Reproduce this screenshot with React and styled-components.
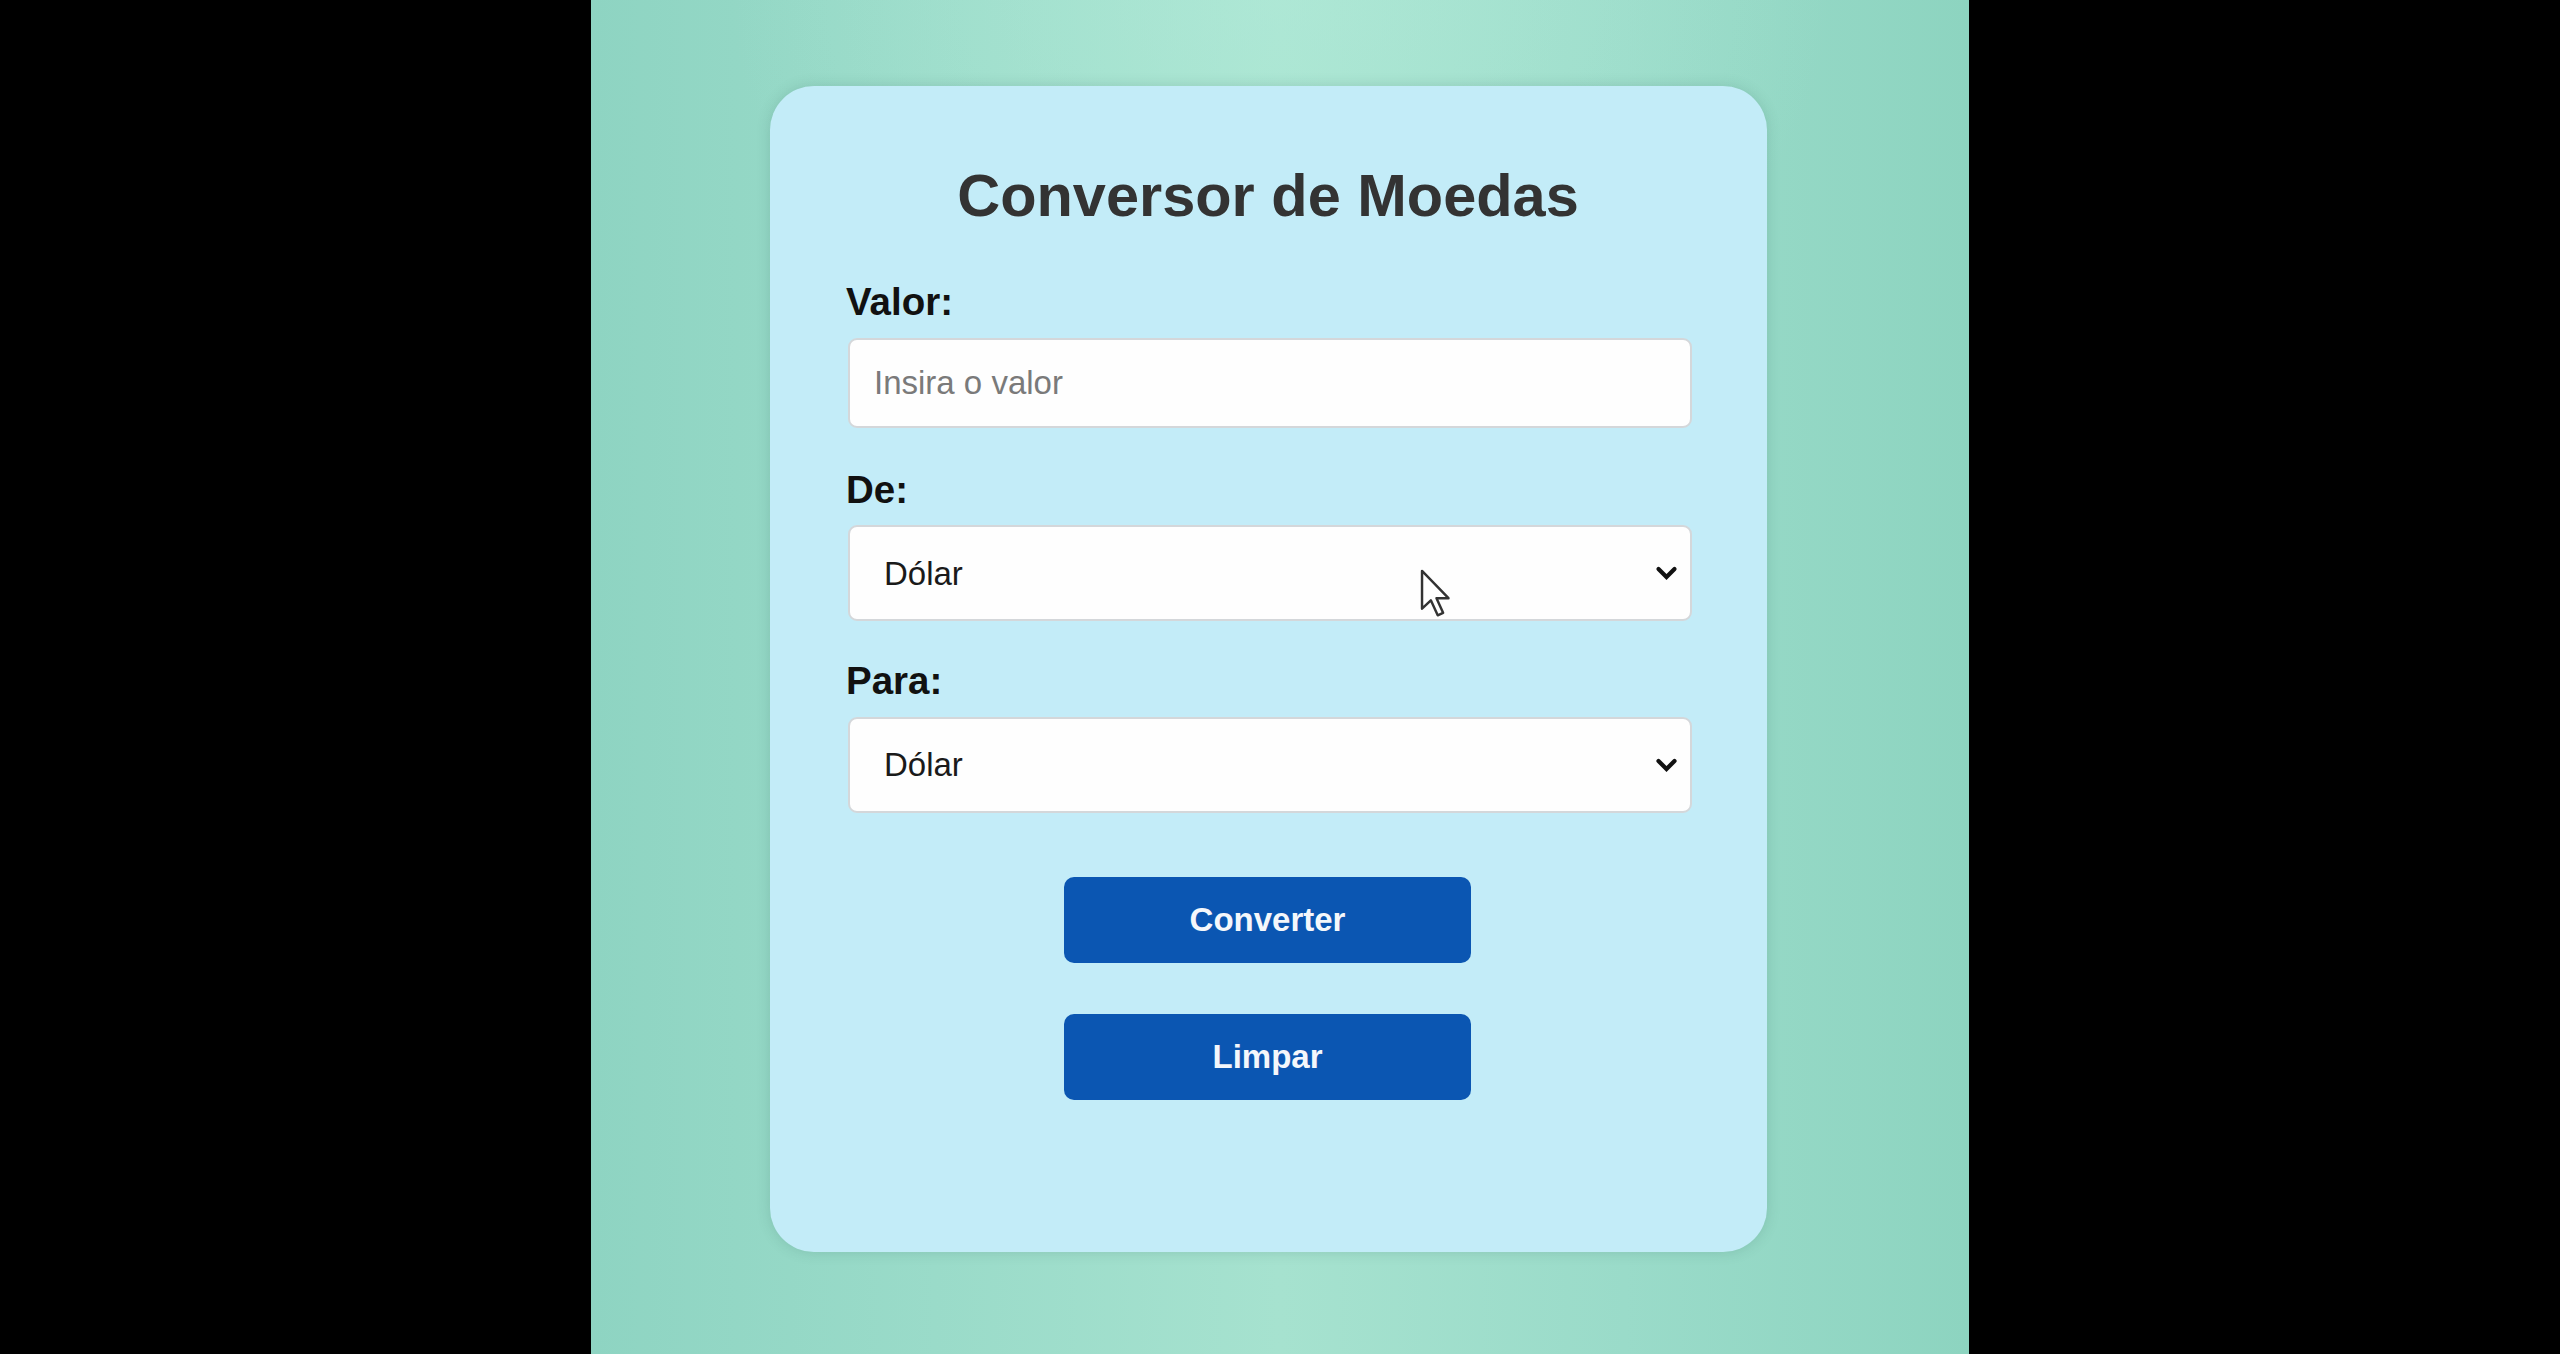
import React from "react";
import styled, { createGlobalStyle } from "styled-components";

const GlobalStyle = createGlobalStyle`
  html, body {
    margin: 0;
    padding: 0;
    background: #000;
  }
  body {
    font-family: "Liberation Sans", Arial, sans-serif;
  }
  * { box-sizing: border-box; }
`;

const Screen = styled.div`
  width: 2560px;
  height: 1354px;
  background: #000;
  display: flex;
  justify-content: flex-start;
  padding-left: 591px;
`;

const Stage = styled.main`
  width: 1378px;
  height: 1354px;
  background:
    radial-gradient(ellipse 40% 30% at 50% 0%, rgba(180, 236, 218, 0.55), rgba(180, 236, 218, 0) 100%),
    linear-gradient(
      90deg,
      #8ed4c2 0%,
      #9adbc9 25%,
      #a6e2cf 50%,
      #9adbc9 75%,
      #8dd4c0 100%
    );
  padding-top: 86px;
  padding-left: 179px;
`;

const Card = styled.section`
  width: 997px;
  background: #c3ecf8;
  border-radius: 44px;
  padding: 75px 75px 152px 78px;
  box-shadow: 0 0 14px rgba(40, 90, 80, 0.18);
  display: flex;
  flex-direction: column;
`;

const Title = styled.h1`
  margin: 0 0 50px;
  font-size: 59.5px;
  font-weight: 700;
  color: #333;
  text-align: center;
  line-height: normal;
  padding-right: 4px;
`;

const Field = styled.div`
  display: flex;
  flex-direction: column;
  margin-bottom: ${(p) => p.$gap}px;
`;

const Label = styled.label`
  font-size: 38.5px;
  font-weight: 700;
  color: #111;
  line-height: normal;
  margin-bottom: 13.5px;
  margin-left: -2px;
`;

const Input = styled.input`
  width: 100%;
  height: 90px;
  border: 2px solid #d4d7da;
  border-radius: 9px;
  background: #fefefe;
  padding: 0 24px;
  font-family: "Liberation Sans", Arial, sans-serif;
  font-size: 33px;
  color: #222;
  outline: none;
  &::placeholder {
    color: #7a7a7a;
  }
`;

const SelectWrap = styled.div`
  position: relative;
  width: 100%;
`;

const Select = styled.select`
  width: 100%;
  height: 96px;
  appearance: none;
  -webkit-appearance: none;
  border: 2px solid #d4d7da;
  border-radius: 9px;
  background: #fefefe;
  padding: 0 60px 0 34px;
  font-family: "Liberation Sans", Arial, sans-serif;
  font-size: 33px;
  color: #1a1a1a;
  outline: none;
`;

const Chevron = styled.svg`
  position: absolute;
  right: 14px;
  top: 50%;
  transform: translateY(-50%);
  width: 23px;
  height: 17px;
  pointer-events: none;
`;

const Cursor = styled.svg`
  position: absolute;
  left: 572px;
  top: 44px;
  width: 32px;
  height: 49px;
  pointer-events: none;
`;

const Actions = styled.div`
  display: flex;
  flex-direction: column;
  align-items: center;
  gap: 51px;
  margin-top: 64px;
  padding-right: 5px;
`;

const Button = styled.button`
  width: 407px;
  height: 86px;
  border: none;
  border-radius: 10px;
  background: #0b56b2;
  color: #f4f7fb;
  font-family: "Liberation Sans", Arial, sans-serif;
  font-size: 33px;
  font-weight: 700;
  cursor: pointer;
`;

const ChevronIcon = () => (
  <Chevron viewBox="0 0 23 17" aria-hidden="true">
    <polyline
      points="3.5,4.5 11.5,12.5 19.5,4.5"
      fill="none"
      stroke="#111"
      strokeWidth="4.2"
      strokeLinecap="round"
      strokeLinejoin="miter"
    />
  </Chevron>
);

const options = ["Dólar", "Real", "Euro"];

export default function App() {
  return (
    <>
      <GlobalStyle />
      <Screen>
        <Stage>
          <Card>
            <Title>Conversor de Moedas</Title>
            <Field $gap={40}>
              <Label htmlFor="valor">Valor:</Label>
              <Input id="valor" type="text" placeholder="Insira o valor" />
            </Field>
            <Field $gap={38}>
              <Label htmlFor="de">De:</Label>
              <SelectWrap>
                <Select id="de" defaultValue="Dólar">
                  {options.map((o) => (
                    <option key={o}>{o}</option>
                  ))}
                </Select>
                <ChevronIcon />
                <Cursor viewBox="0 0 13 20" aria-hidden="true">
                  <path
                    d="M0.8 0.8 L0.8 16.2 L4.4 12.8 L7.2 18.9 L9.4 17.9 L6.7 11.9 L11.6 11.9 Z"
                    fill="#fff"
                    stroke="#333"
                    strokeWidth="1"
                    strokeLinejoin="round"
                  />
                </Cursor>
              </SelectWrap>
            </Field>
            <Field $gap={0}>
              <Label htmlFor="para">Para:</Label>
              <SelectWrap>
                <Select id="para" defaultValue="Dólar">
                  {options.map((o) => (
                    <option key={o}>{o}</option>
                  ))}
                </Select>
                <ChevronIcon />
              </SelectWrap>
            </Field>
            <Actions>
              <Button type="button">Converter</Button>
              <Button type="button">Limpar</Button>
            </Actions>
          </Card>
        </Stage>
      </Screen>
    </>
  );
}
